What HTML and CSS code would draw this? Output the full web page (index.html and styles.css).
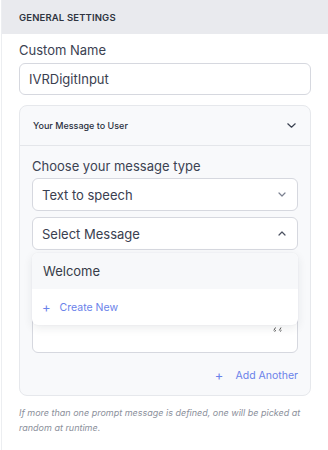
FILE: index.html
```html
<!DOCTYPE html>
<html>
<head>
<meta charset="utf-8">
<link rel="stylesheet" href="styles.css">
</head>
<body>
<div class="panel">
  <div class="section-head">GENERAL SETTINGS</div>
  <div class="section-body">
    <div class="label">Custom Name</div>
    <div class="input">IVRDigitInput</div>

    <div class="card">
      <div class="card-head">
        <span>Your Message to User</span>
        <svg class="chev-dark" width="9" height="5" viewBox="0 0 9 5"><path d="M0.8 0.8l3.7 3.4 3.7-3.4" fill="none" stroke="#3a4150" stroke-width="1.2" stroke-linecap="round" stroke-linejoin="round"/></svg>
      </div>
      <div class="card-body">
        <div class="label">Choose your message type</div>
        <div class="select">
          <span>Text to speech</span>
          <svg width="8" height="5" viewBox="0 0 8 5"><path d="M1 1l3 3 3-3" fill="none" stroke="#7b8190" stroke-width="1.2" stroke-linecap="round" stroke-linejoin="round"/></svg>
        </div>
        <div class="select-wrap">
          <div class="select open">
            <span>Select Message</span>
            <svg width="8" height="5" viewBox="0 0 8 5"><path d="M1 4l3-3 3 3" fill="none" stroke="#4b5160" stroke-width="1.2" stroke-linecap="round" stroke-linejoin="round"/></svg>
          </div>
          <div class="menu">
            <div class="menu-item">Welcome</div>
            <div class="menu-create"><span class="plus">+</span><span>Create New</span></div>
          </div>
        </div>
        <div class="textarea">
          <svg class="quote" width="10" height="5" viewBox="0 0 10 5"><path d="M2.5 0.5L0.8 3.5M3 3.3L1.5 4.5M8 0.5L6.3 3.5M8.5 3.3L7 4.5" fill="none" stroke="#555" stroke-width="1"/></svg>
        </div>
        <div class="add-row"><span class="plus">+</span><span>Add Another</span></div>
      </div>
    </div>

    <p class="hint">If more than one prompt message is defined, one will be picked at random at runtime.</p>
  </div>
</div>
</body>
</html>
```

FILE: styles.css
```css
* { box-sizing: border-box; }
html, body { margin: 0; padding: 0; background: #fff; }
body {
  font-family: Inter, "Noto Sans", "Liberation Sans", sans-serif;
  color: #3b4150;
  width: 328px;
  height: 450px;
  overflow: hidden;
}
.panel {
  margin-left: 1px;
  border-left: 1px solid #eceef1;
  min-height: 450px;
}
.section-head {
  height: 34px;
  background: #e9eaee;
  padding-left: 17px;
  display: flex;
  align-items: center;
  font-size: 9.5px;
  font-weight: 600;
  color: #2f3440;
  letter-spacing: 0.15px;
}
.section-body {
  padding: 0 17px;
}
.label {
  font-size: 13px;
  line-height: 16px;
  color: #3b4252;
}
.section-body > .label { margin-top: 8px; }
.input {
  margin-top: 5px;
  height: 32px;
  border: 1px solid #d6d8df;
  border-radius: 6px;
  padding-left: 9px;
  display: flex;
  align-items: center;
  font-size: 13px;
  color: #3a4050;
}
.card {
  margin-top: 10px;
  border: 1px solid #e6e8ec;
  border-radius: 8px;
  background: #f8f9fb;
}
.card-head {
  height: 40px;
  border-bottom: 1px solid #e4e6ea;
  padding: 0 14px 0 13px;
  display: flex;
  align-items: center;
  justify-content: space-between;
  font-size: 9px;
  font-weight: 500;
  color: #2b3040;
}
.card-body {
  padding: 12px;
}
.card-body > .label { margin-bottom: 4px; }
.select {
  height: 33px;
  border: 1px solid #d6d8df;
  border-radius: 6px;
  background: #fff;
  display: flex;
  align-items: center;
  justify-content: space-between;
  padding: 0 11px 0 9px;
  font-size: 13px;
  color: #3a4050;
}
.select-wrap {
  position: relative;
  margin-top: 6px;
}
.menu {
  position: absolute;
  left: 0;
  right: 0;
  top: calc(100% + 3px);
  background: #fff;
  border-radius: 6px;
  box-shadow: 0 3px 10px rgba(30, 40, 60, 0.09), 0 0 2px rgba(30, 40, 60, 0.06);
  overflow: hidden;
  z-index: 2;
}
.menu-item {
  height: 36px;
  background: #f7f8fa;
  padding-left: 11px;
  display: flex;
  align-items: center;
  font-size: 13px;
  color: #363c48;
}
.menu-create {
  height: 36px;
  padding-left: 10px;
  display: flex;
  align-items: center;
  gap: 9px;
  font-size: 10.5px;
  color: #6a82ea;
}
.plus {
  font-size: 13px;
  line-height: 1;
  color: #6a82ea;
}
.textarea {
  position: relative;
  margin-top: 6px;
  height: 97px;
  border: 1px solid #d6d8df;
  border-radius: 6px;
  background: #fff;
}
.quote {
  position: absolute;
  top: 70px;
  right: 14px;
}
.add-row {
  margin-top: 14px;
  height: 16px;
  display: flex;
  justify-content: flex-end;
  align-items: center;
  gap: 12px;
  font-size: 10.5px;
  color: #6a82ea;
}
.hint {
  margin: 9px 0 0 0;
  font-size: 9px;
  line-height: 15px;
  font-style: italic;
  color: #8b909b;
}
```
